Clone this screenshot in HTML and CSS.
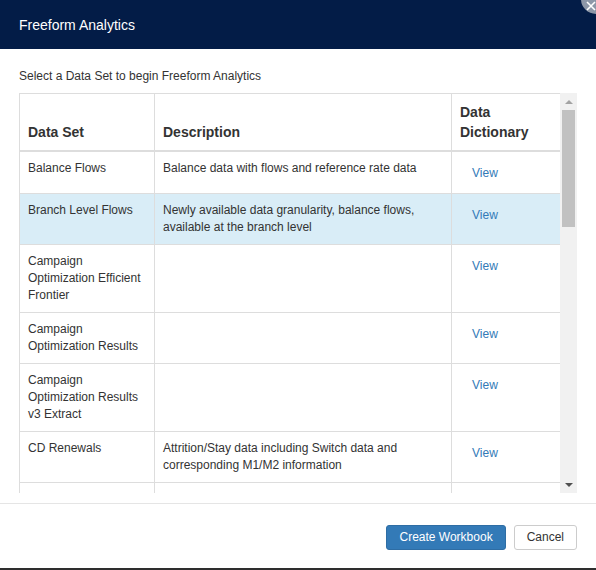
FILE: index.html
```html
<!DOCTYPE html>
<html>
<head>
<meta charset="utf-8">
<link rel="stylesheet" href="styles.css">
</head>
<body>
<div class="modal">
  <span class="close-btn"><svg class="close-icon" viewBox="0 0 10 10" width="10" height="10"><path d="M1 1L9 9M9 1L1 9" stroke="#fff" stroke-width="1.6" fill="none"/></svg></span>
  <div class="modal-header">
    <h4 class="modal-title">Freeform Analytics</h4>
  </div>
  <div class="modal-body">
    <p class="intro">Select a Data Set to begin Freeform Analytics</p>
    <div class="grid-frame">
      <div class="grid-viewport">
        <table class="grid">
          <colgroup>
            <col class="c-set">
            <col class="c-desc">
            <col class="c-dict">
          </colgroup>
          <thead>
            <tr><th>Data Set</th><th>Description</th><th>Data Dictionary</th></tr>
          </thead>
          <tbody>
            <tr><td>Balance Flows</td><td>Balance data with flows and reference rate data</td><td><a class="view">View</a></td></tr>
            <tr class="selected"><td>Branch Level Flows</td><td>Newly available data granularity, balance flows, available at the branch level</td><td><a class="view">View</a></td></tr>
            <tr><td>Campaign Optimization Efficient Frontier</td><td></td><td><a class="view">View</a></td></tr>
            <tr><td>Campaign Optimization Results</td><td></td><td><a class="view">View</a></td></tr>
            <tr><td>Campaign Optimization Results v3 Extract</td><td></td><td><a class="view">View</a></td></tr>
            <tr><td>CD Renewals</td><td>Attrition/Stay data including Switch data and corresponding M1/M2 information</td><td><a class="view">View</a></td></tr>
            <tr class="tail"><td></td><td></td><td></td></tr>
          </tbody>
        </table>
      </div>
      <div class="scrollbar">
        <span class="sb-btn sb-up"></span>
        <div class="sb-track"><div class="sb-thumb"></div></div>
        <span class="sb-btn sb-down"></span>
      </div>
    </div>
  </div>
  <div class="modal-footer">
    <button class="btn btn-primary">Create Workbook</button>
    <button class="btn btn-default">Cancel</button>
  </div>
</div>
</body>
</html>
```

FILE: styles.css
```css
html, body {
  margin: 0;
  padding: 0;
  background: #2e2e2e;
}
body {
  font-family: "Liberation Sans", Arial, sans-serif;
  font-size: 12px;
  color: #333;
  width: 596px;
  height: 570px;
  overflow: hidden;
}
.modal {
  position: relative;
  background: #fff;
  height: 568px;
  display: flex;
  flex-direction: column;
}
.close-btn {
  position: absolute;
  top: -16px;
  right: -15px;
  width: 30px;
  height: 30px;
  border-radius: 50%;
  background: #8d97a8;
  display: flex;
  align-items: center;
  justify-content: center;
}
.close-icon {
  margin: 14px 10px 0 0;
}
.modal-header {
  background: #031c47;
  height: 49px;
  padding: 15px 19px 0;
  box-sizing: border-box;
}
.modal-title {
  margin: 0;
  color: #fff;
  font-size: 14px;
  font-weight: normal;
  line-height: 20px;
}
.modal-body {
  padding: 19px 19px 10px;
  border-bottom: 1px solid #e5e5e5;
}
.intro {
  margin: 0 0 8px;
  line-height: 17px;
}
.grid-frame {
  display: flex;
  height: 400px;
}
.grid-viewport {
  width: 541px;
  overflow: hidden;
}
.grid {
  width: 541px;
  border-collapse: collapse;
  table-layout: fixed;
  border: 1px solid #ddd;
}
.c-set { width: 135px; }
.c-desc { width: 297px; }
.c-dict { width: 109px; }
.grid th {
  text-align: left;
  vertical-align: bottom;
  font-size: 14px;
  font-weight: bold;
  line-height: 20px;
  padding: 8px;
  border: 1px solid #ddd;
  border-bottom: 2px solid #ddd;
}
.grid td {
  vertical-align: top;
  line-height: 17px;
  padding: 8px;
  border: 1px solid #ddd;
}
.grid tr.tail td {
  height: 17px;
}
.grid tr.selected td {
  background: #d9edf7;
}
.view {
  display: inline-block;
  padding: 4px 12px 3px;
  line-height: 18px;
  color: #337ab7;
  cursor: pointer;
}
.scrollbar {
  width: 17px;
  background: #f1f1f1;
  display: flex;
  flex-direction: column;
}
.sb-btn {
  height: 17px;
  display: flex;
  align-items: center;
  justify-content: center;
}
.sb-up::before {
  content: "";
  border-left: 4px solid transparent;
  border-right: 4px solid transparent;
  border-bottom: 4px solid #a3a3a3;
}
.sb-down::before {
  content: "";
  border-left: 4px solid transparent;
  border-right: 4px solid transparent;
  border-top: 4px solid #505050;
}
.sb-track {
  flex: 1;
}
.sb-thumb {
  height: 117px;
  margin: 0 2px;
  background: #c1c1c1;
}
.modal-footer {
  display: flex;
  justify-content: flex-end;
  gap: 8px;
  padding: 21px 19px 18px;
}
.btn {
  font-family: "Liberation Sans", Arial, sans-serif;
  font-size: 12px;
  line-height: 17px;
  padding: 3px 12px;
  border: 1px solid transparent;
  border-radius: 3px;
  margin: 0;
}
.btn-primary {
  background: #337ab7;
  border-color: #2e6da4;
  color: #fff;
}
.btn-default {
  background: #fff;
  border-color: #ccc;
  color: #333;
}
```
